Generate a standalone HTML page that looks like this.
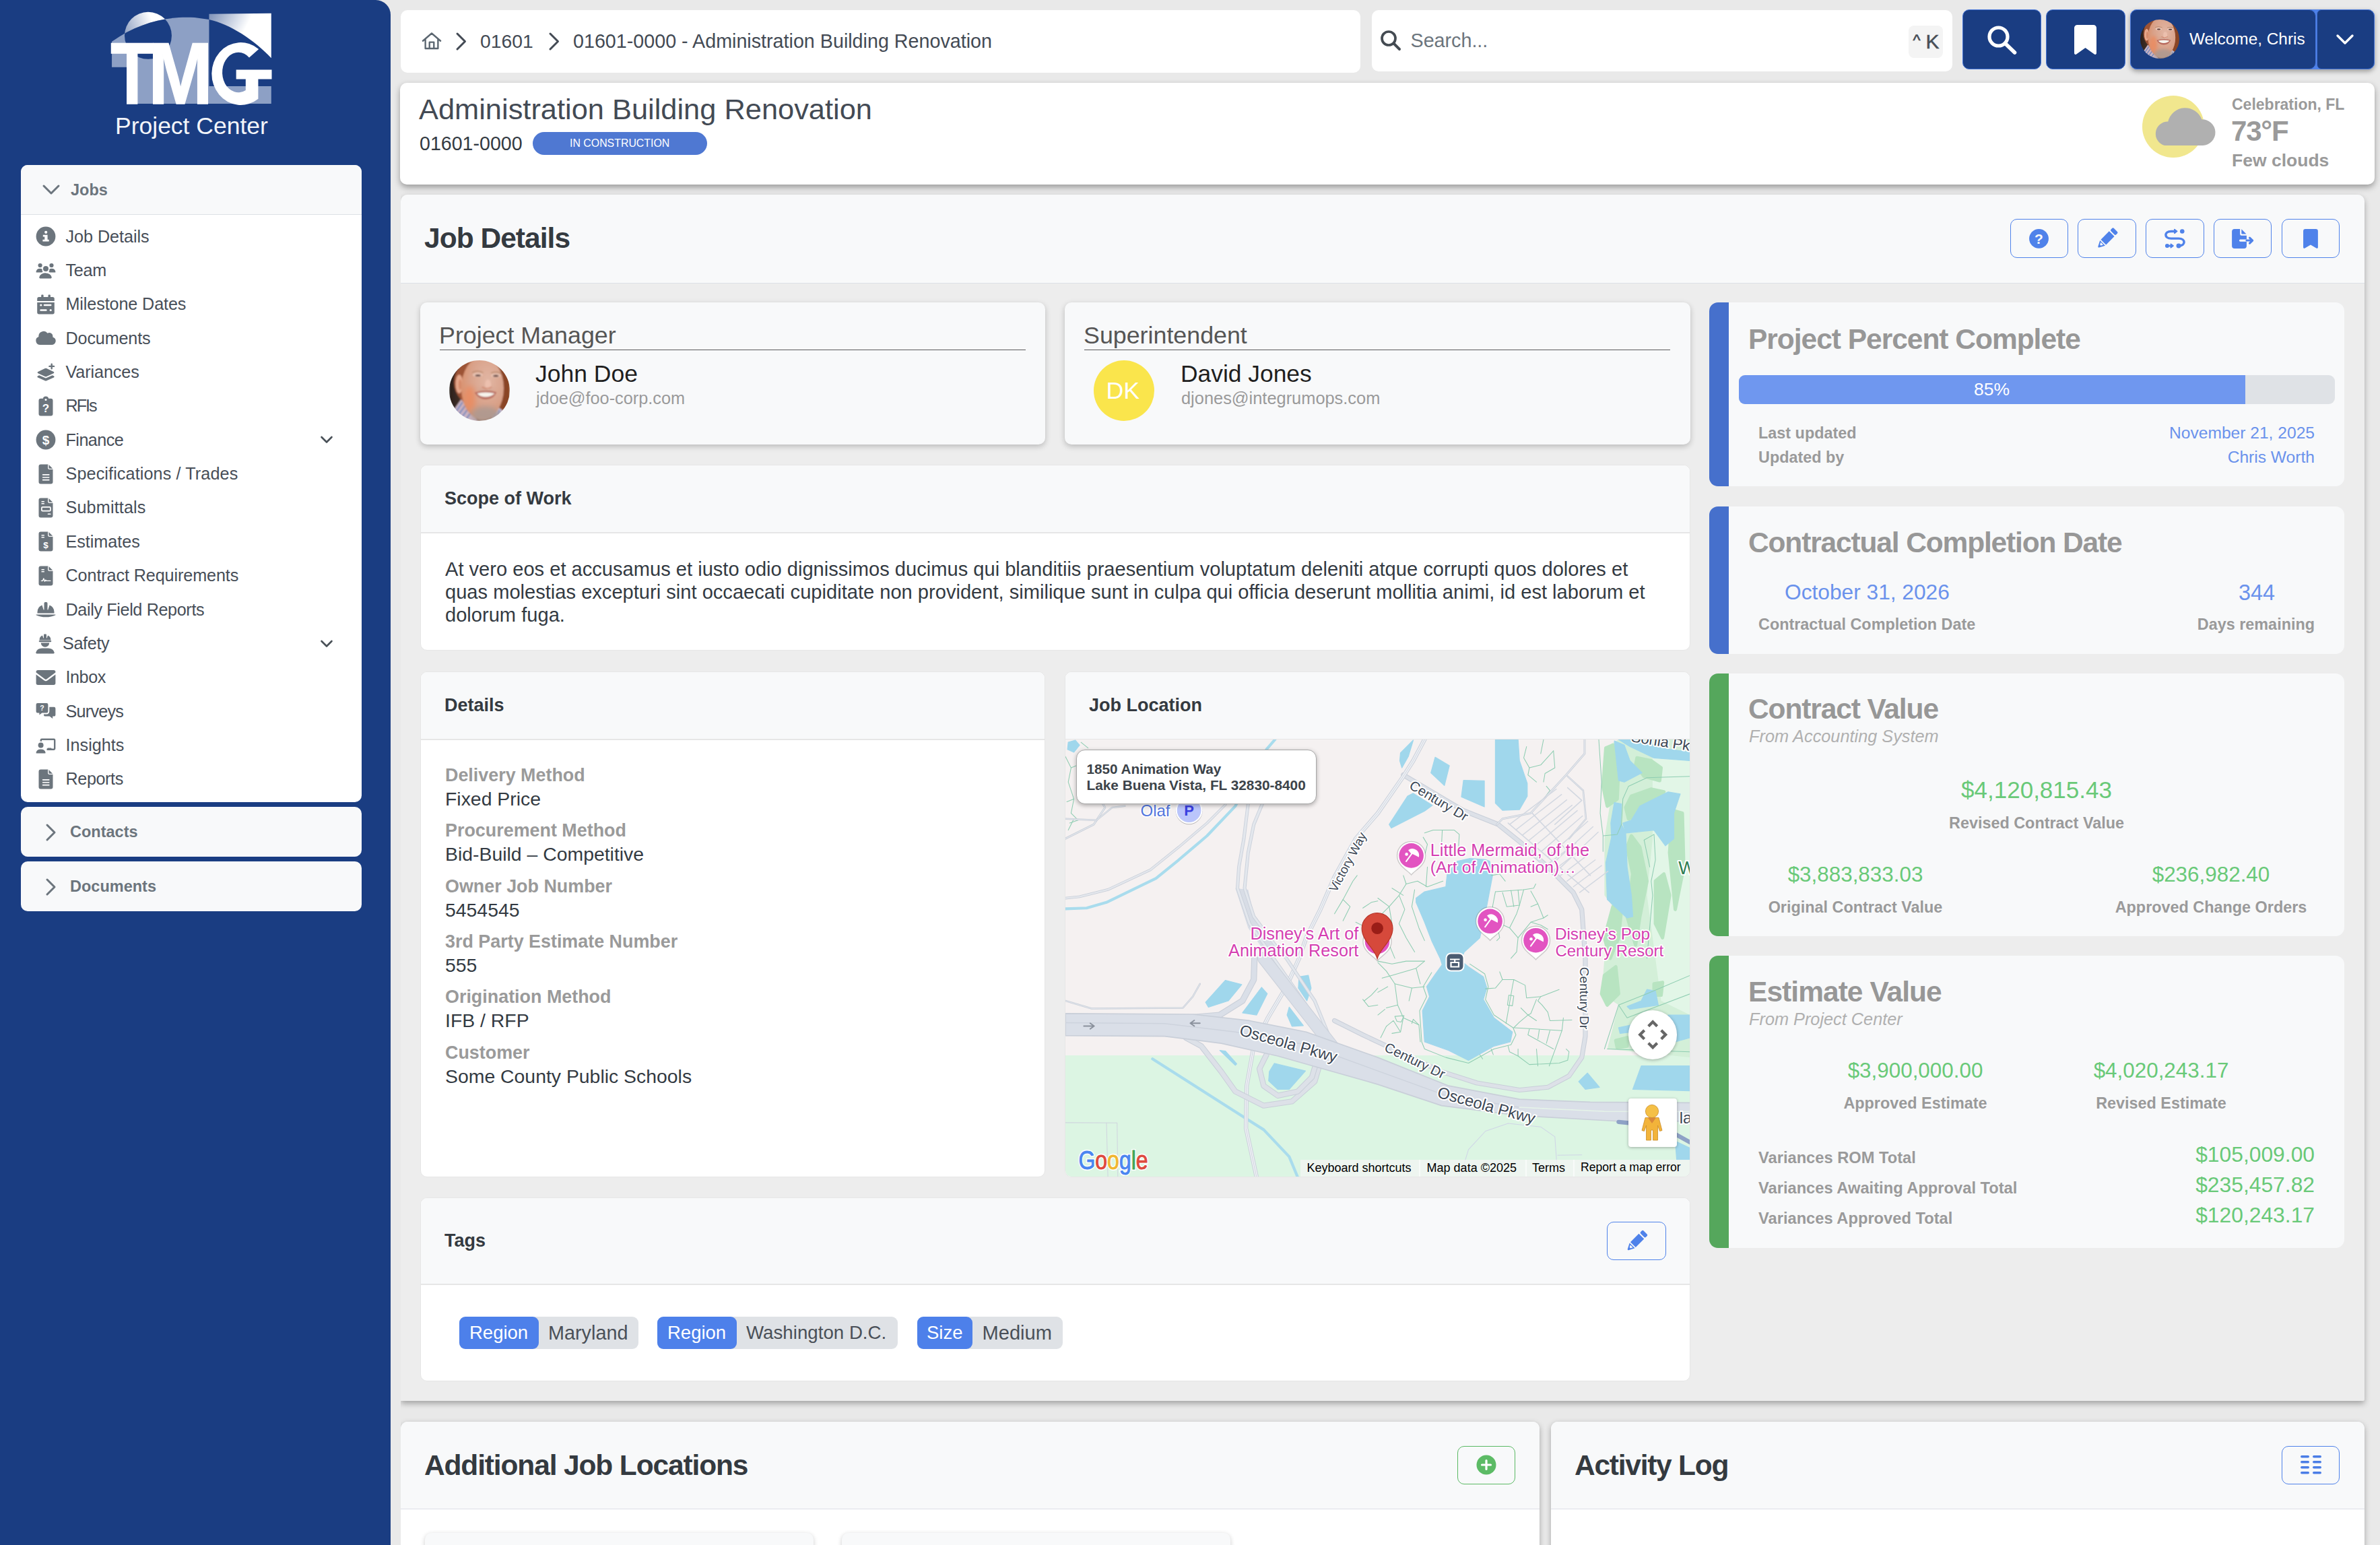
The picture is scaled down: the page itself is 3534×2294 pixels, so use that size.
<!DOCTYPE html>
<html><head><meta charset="utf-8"><title>Job Details</title>
<style>
*{box-sizing:border-box;margin:0;padding:0}
html,body{width:3534px;height:2294px;overflow:hidden}
body{background:#e9e9e9;font-family:"Liberation Sans",sans-serif;color:#333;position:relative}
.a{position:absolute}
.t{position:absolute;white-space:nowrap;line-height:1}
.b{font-weight:bold}
svg{position:absolute;overflow:visible}
#side{left:0;top:0;width:580px;height:2294px;background:#1a3d82;border-top-right-radius:22px}
.pnl{background:#f8f9fa;border-radius:10px}
.si{left:97px;font-size:25.2px;color:#474e58}
.ic{fill:#5f6770}
.card{background:#f8f9fa;border-radius:10px}
.hd{font-size:27px;font-weight:bold;color:#343a40}
.lbl{font-size:26.9px;font-weight:bold;color:#9a9a9a;left:661px}
.val{font-size:28.400px;color:#333a42;left:661px}
.btn{border:1.400px solid #4f82ea;border-radius:10px;background:#f8f9fa}
.rc{left:2538px;width:943px;background:#f8f9fa;border-radius:13px;overflow:hidden}
.rc .bar{position:absolute;left:0;top:0;bottom:0;width:29px}
.g{color:#69c978}
.gl{color:#9a9a9a;font-weight:bold;font-size:23.4px}
.bl{color:#6a92ec}
.rt{font-size:42.500px;font-weight:bold;color:#979797}


.tb{background:#1a3d82;border:1.500px solid #4474d8;border-radius:10px}
.face{border-radius:50%;background:radial-gradient(circle at 52% 48%,#e8b9a0 0,#dba489 30%,#b8704f 48%,#8a4a2e 62%,#4a2a20 85%)}


.chip{top:1955px;height:48px;background:#dfe2e6;border-radius:9px}
.chipk{top:1955px;height:48px;background:#4d80ea;border-radius:9px}
.ck{top:1965px;font-size:27.500px;color:#fff}
.cv{top:1964.500px;font-size:28.500px;color:#4a5058}

.c{text-align:center}</style></head><body>
<div id="side" class="a">
<svg style="left:140px;top:0" width="300" height="230" viewBox="0 0 2015 1545">
<defs>
<linearGradient id="lg1" x1="310" y1="300" x2="690" y2="150" gradientUnits="userSpaceOnUse"><stop offset="0" stop-color="#fff" stop-opacity=".55"/><stop offset=".7" stop-color="#fff" stop-opacity="1"/></linearGradient>
<linearGradient id="lg2" x1="1150" y1="150" x2="1600" y2="380" gradientUnits="userSpaceOnUse"><stop offset="0" stop-color="#fff" stop-opacity=".45"/><stop offset=".75" stop-color="#fff" stop-opacity="1"/></linearGradient>
<clipPath id="cpA"><path d="M175 415 C450 215 750 160 1000 175 L1145 195 L1145 860 L1765 860 L1765 1035 L330 1035 L330 670 L175 670Z"/></clipPath>
</defs>
<circle cx="537" cy="355" r="235" fill="url(#lg1)"/>
<path d="M175 415 C450 215 750 160 1000 175 L1145 195 L1145 860 L1765 860 L1765 1035 L330 1035 L330 670 L175 670Z" fill="#8da0c5"/>
<circle cx="537" cy="355" r="235" fill="#1a3d82" clip-path="url(#cpA)"/>
<path d="M1145 140 L1765 133 L1765 580 C1600 400 1350 240 1145 195Z" fill="url(#lg2)"/>
<g fill="#fff" stroke="#fff" stroke-width="10" font-family="Liberation Sans" font-weight="bold" font-size="872">
<text transform="translate(162.1 1035) scale(.806 1)">T</text>
<text transform="translate(537.2 1035) scale(.8887 1)">M</text>
<path stroke="none" d="M1640 490A290 312 0 1 0 1635 985L1635 790L1770 790L1770 695L1415 695L1415 790L1510 790L1510 900A160 200 0 1 1 1545 575Z"/>
</g>
</svg>
<div class="t" style="left:171px;top:170px;font-size:35.5px;color:#f3f5fa">Project Center</div>

<!-- Jobs panel -->
<div class="a pnl" style="left:31px;top:245px;width:506px;height:946px;background:#fff;overflow:hidden">
 <div class="a" style="left:0;top:0;width:506px;height:74px;background:#f8f9fa;border-bottom:1.200px solid #dde1e6"></div>
</div>
<svg style="left:62px;top:271.500px" width="28" height="20" viewBox="0 0 28 20"><path d="M3 4 L14 15 L25 4" fill="none" stroke="#6c757d" stroke-width="3" stroke-linecap="round" stroke-linejoin="round"/></svg>
<div class="t b" style="left:105px;top:270.500px;font-size:23.5px;color:#6c757d">Jobs</div>
<svg style="left:53.4px;top:336.2px" width="30" height="30" viewBox="-15 -15 30 30" fill="#6c757d"><circle r="14.4"/><g fill="#fff"><circle cx=".2" cy="-6.2" r="2.1"/><path d="M-4.2 -2.3H2.6V4.7H4.7V7.6H-4.6V4.7H-1.7V.6H-4.2Z"/></g></svg>
<div class="t si" style="left:97.5px;top:338.5px;letter-spacing:-0.04px">Job Details</div>
<svg style="left:53.4px;top:386.6px" width="30" height="30" viewBox="-15 -15 30 30" fill="#6c757d"><circle cx="0" cy="-2.9" r="4"/><path d="M-8.4 11.6a1.6 1.6 0 0 1-1.3-2A9 7 0 0 1 0 3.4 9 7 0 0 1 8.7 9.6a1.6 1.6 0 0 1-1.3 2Z"/><circle cx="-8.4" cy="-8" r="3.1"/><circle cx="8.5" cy="-8" r="3.1"/><path d="M-14.4 1.2A6 5.5 0 0 1-8.4 -3.2 6 5.5 0 0 1-5.4 -2.3 6 6 0 0 0-4.4 1.9 10 8 0 0 0-6.5 2.6H-13.6a1 1 0 0 1-.8-1.4Z"/><path d="M14.4 1.2A6 5.5 0 0 0 8.4 -3.2 6 5.5 0 0 0 5.4 -2.3 6 6 0 0 1 4.4 1.9 10 8 0 0 1 6.5 2.6H13.6a1 1 0 0 0 .8-1.4Z"/></svg>
<div class="t si" style="left:97.5px;top:388.9px;letter-spacing:-0.27px">Team</div>
<svg style="left:53.4px;top:436.9px" width="30" height="30" viewBox="-15 -15 30 30" fill="#6c757d"><rect x="-6.8" y="-14.4" width="3.4" height="6" rx="1.2"/><rect x="3.5" y="-14.4" width="3.4" height="6" rx="1.2"/><path d="M-12.8 -8.2a2.7 2.7 0 0 1 2.7-2.7H10.1a2.7 2.7 0 0 1 2.7 2.7V-5H-12.8Z"/><path d="M-12.8 -3.1H12.8V11.7a2.7 2.7 0 0 1-2.7 2.7H-10.1a2.7 2.7 0 0 1-2.7-2.7Z"/><g fill="#fff"><circle cx="-7.2" cy="1" r="1.6"/><rect x="-3.3" y="-.3" width="11.8" height="2.6" rx="1.3"/><rect x="-8.7" y="7.2" width="10.4" height="2.6" rx="1.3"/><circle cx="7.2" cy="8.5" r="1.6"/></g></svg>
<div class="t si" style="left:97.5px;top:439.3px;letter-spacing:-0.12px">Milestone Dates</div>
<svg style="left:53.4px;top:487.3px" width="30" height="30" viewBox="-15 -15 30 30" fill="#6c757d"><path d="M-8.3 10A6.2 6.2 0 0 1-10.6 -2 7.4 7.4 0 0 1 2.6 -7.3 5.3 5.3 0 0 1 10.3 -1.6 5.9 5.9 0 0 1 8.5 10Z"/></svg>
<div class="t si" style="left:97.5px;top:489.6px;letter-spacing:-0.16px">Documents</div>
<svg style="left:53.4px;top:537.6px" width="30" height="30" viewBox="-15 -15 30 30" fill="#6c757d"><path d="M-1.2 -5.9a2.8 2.8 0 0 1 2.4 0L11.6 -1a1.2 1.2 0 0 1 0 2.2L1.2 6a2.8 2.8 0 0 1-2.4 0L-11.6 1.2a1.2 1.2 0 0 1 0-2.2Z"/><path d="M-11.9 5.2l2.2-1 8.5 3.9a2.8 2.8 0 0 0 2.4 0l8.5-3.9 2.2 1a1.2 1.2 0 0 1 0 2.2L1.2 12.300a2.8 2.8 0 0 1-2.4 0L-11.900 7.4a1.2 1.2 0 0 1 0-2.2Z"/><path d="M8.700 -12.4V-5.8M5.400 -9.100H12" stroke="#6c757d" stroke-width="2.400" stroke-linecap="round"/></svg>
<div class="t si" style="left:97.5px;top:540.0px;letter-spacing:-0.11px">Variances</div>
<svg style="left:53.4px;top:588.0px" width="30" height="30" viewBox="-15 -15 30 30" fill="#6c757d"><path d="M-10.5 -8.200a3 3 0 0 1 3-3H-4.200A4.300 4.300 0 0 1 0 -14.400 4.300 4.300 0 0 1 4.200 -11.200H7.500a3 3 0 0 1 3 3V11.400a3 3 0 0 1-3 3H-7.500a3 3 0 0 1-3-3Z"/><circle cx="0" cy="-9.500" r="1.500" fill="#fff"/><text x="0" y="8.600" font-size="17" font-weight="bold" text-anchor="middle" fill="#fff" font-family="Liberation Sans">?</text></svg>
<div class="t si" style="left:97.5px;top:590.3px;letter-spacing:-2.06px">RFIs</div>
<svg style="left:53.4px;top:638.4px" width="30" height="30" viewBox="-15 -15 30 30" fill="#6c757d"><circle r="14.400"/><text x="0" y="6.800" font-size="19" font-weight="bold" text-anchor="middle" fill="#fff" font-family="Liberation Sans">$</text></svg>
<div class="t si" style="left:97.5px;top:640.7px;letter-spacing:-0.54px">Finance</div>
<svg style="left:475px;top:646.4px" width="20" height="14" viewBox="0 0 20 14"><path d="M2.500 3 L10 10.500 L17.500 3" fill="none" stroke="#495057" stroke-width="2.600" stroke-linecap="round" stroke-linejoin="round"/></svg>
<svg style="left:53.4px;top:688.7px" width="30" height="30" viewBox="-15 -15 30 30" fill="#6c757d"><path d="M-10.5 -11.4a3 3 0 0 1 3-3H3.6L10.5 -7.5V11.4a3 3 0 0 1-3 3H-7.5a3 3 0 0 1-3-3Z"/><path d="M3.6 -14.4V-9a1.5 1.5 0 0 0 1.5 1.5H10.5Z" fill="#fff" stroke="#fff" stroke-width=".9"/><path d="M4.400 -14.100L10.200 -8.200H5.800a1.400 1.400 0 0 1-1.400-1.400Z"/><g fill="#fff"><rect x="-5.200" y="0" width="10.800" height="1.700" rx=".8"/><rect x="-5.200" y="3.900" width="10.800" height="1.700" rx=".8"/><rect x="-5.200" y="7.800" width="10.800" height="1.700" rx=".8"/></g></svg>
<div class="t si" style="left:97.5px;top:691.1px;letter-spacing:0.11px">Specifications / Trades</div>
<svg style="left:53.4px;top:739.1px" width="30" height="30" viewBox="-15 -15 30 30" fill="#6c757d"><path d="M-10.5 -11.4a3 3 0 0 1 3-3H3.6L10.5 -7.5V11.4a3 3 0 0 1-3 3H-7.5a3 3 0 0 1-3-3Z"/><path d="M3.6 -14.4V-9a1.5 1.5 0 0 0 1.5 1.5H10.5Z" fill="#fff" stroke="#fff" stroke-width=".9"/><path d="M4.400 -14.100L10.200 -8.200H5.800a1.400 1.400 0 0 1-1.400-1.400Z"/><rect x="-6.6" y="-9.9" width="4.6" height="1.5" rx=".7" fill="#fff"/><rect x="-6.6" y="-6.9" width="4.6" height="1.5" rx=".7" fill="#fff"/><rect x="-6.100" y="-1.200" width="13" height="5.800" rx="1.200" fill="none" stroke="#fff" stroke-width="1.700"/><rect x="2.700" y="8.600" width="4.800" height="1.500" rx=".7" fill="#fff"/></svg>
<div class="t si" style="left:97.5px;top:741.4px;letter-spacing:0.15px">Submittals</div>
<svg style="left:53.4px;top:789.4px" width="30" height="30" viewBox="-15 -15 30 30" fill="#6c757d"><path d="M-10.5 -11.4a3 3 0 0 1 3-3H3.6L10.5 -7.5V11.4a3 3 0 0 1-3 3H-7.5a3 3 0 0 1-3-3Z"/><path d="M3.6 -14.4V-9a1.5 1.5 0 0 0 1.5 1.5H10.5Z" fill="#fff" stroke="#fff" stroke-width=".9"/><path d="M4.400 -14.100L10.200 -8.200H5.800a1.400 1.400 0 0 1-1.400-1.400Z"/><rect x="-6.6" y="-9.9" width="4.6" height="1.5" rx=".7" fill="#fff"/><rect x="-6.6" y="-6.9" width="4.6" height="1.5" rx=".7" fill="#fff"/><text x="0" y="9.500" font-size="13.500" font-weight="bold" text-anchor="middle" fill="#fff" font-family="Liberation Sans">$</text></svg>
<div class="t si" style="left:97.5px;top:791.8px;letter-spacing:-0.04px">Estimates</div>
<svg style="left:53.4px;top:839.8px" width="30" height="30" viewBox="-15 -15 30 30" fill="#6c757d"><path d="M-10.5 -11.4a3 3 0 0 1 3-3H3.6L10.5 -7.5V11.4a3 3 0 0 1-3 3H-7.5a3 3 0 0 1-3-3Z"/><path d="M3.6 -14.4V-9a1.5 1.5 0 0 0 1.5 1.5H10.5Z" fill="#fff" stroke="#fff" stroke-width=".9"/><path d="M4.400 -14.100L10.200 -8.200H5.800a1.400 1.400 0 0 1-1.400-1.400Z"/><rect x="-6.6" y="-9.9" width="4.6" height="1.5" rx=".7" fill="#fff"/><rect x="-6.6" y="-6.9" width="4.6" height="1.5" rx=".7" fill="#fff"/><path d="M-6.600 7.400h2l1.400-3.400 1.700 4.200 1.300-2 .9 1.200H6.800" fill="none" stroke="#fff" stroke-width="1.400" stroke-linecap="round" stroke-linejoin="round"/></svg>
<div class="t si" style="left:97.5px;top:842.1px;letter-spacing:-0.11px">Contract Requirements</div>
<svg style="left:53.4px;top:890.2px" width="30" height="30" viewBox="-15 -15 30 30" fill="#6c757d"><path d="M-12.500 5.600V3.700A11 11 0 0 1-5.600 -6.600L-3.300 .4H-2.500V-9.300a1.700 1.700 0 0 1 1.700-1.700H.8a1.700 1.700 0 0 1 1.700 1.700V.4H3.300L5.600 -6.600A11 11 0 0 1 12.500 3.700V5.600Z"/><path d="M-14.400 7.500H14.400V8.200C11 10.300 5 11.300 0 11.300S-11 10.300-14.400 8.200Z"/></svg>
<div class="t si" style="left:97.5px;top:892.5px;letter-spacing:-0.37px">Daily Field Reports</div>
<svg style="left:52.2px;top:940.5px" width="30" height="30" viewBox="-15 -15 30 30" fill="#6c757d"><path d="M-8.400 -5.600V-6.600A7 7 0 0 1-4 -12.600L-2.600 -8.500H-2V-13.400a1 1 0 0 1 1-1H1a1 1 0 0 1 1 1V-8.500H2.600L4 -12.600A7 7 0 0 1 8.400 -6.600V-5.600Z"/><rect x="-9.300" y="-5" width="18.600" height="2.200" rx="1.100"/><path d="M-6.200 -1.400H6.200A6.200 6.200 0 0 1-6.200 -1.400Z"/><path d="M-12.400 14.400A1.400 1.400 0 0 1-13.700 12.700 9.500 8.500 0 0 1-4.500 6.500H4.500A9.500 8.500 0 0 1 13.700 12.700 1.400 1.400 0 0 1 12.400 14.400Z" transform="translate(0 0)"/></svg>
<div class="t si" style="left:93px;top:942.9px;letter-spacing:-0.35px">Safety</div>
<svg style="left:475px;top:948.5px" width="20" height="14" viewBox="0 0 20 14"><path d="M2.500 3 L10 10.500 L17.500 3" fill="none" stroke="#495057" stroke-width="2.600" stroke-linecap="round" stroke-linejoin="round"/></svg>
<svg style="left:53.4px;top:990.9px" width="30" height="30" viewBox="-15 -15 30 30" fill="#6c757d"><path d="M-14.400 -8.400a2.700 2.700 0 0 1 2.700-2.700H11.700a2.700 2.700 0 0 1 2.700 2.700V-7.400L1.400 2.200a2.400 2.400 0 0 1-2.800 0L-14.400 -7.400Z"/><path d="M-14.400 -4.600L-2.500 4.200a4.200 4.200 0 0 0 5 0L14.400 -4.600V8.300a2.700 2.700 0 0 1-2.700 2.700H-11.700a2.700 2.700 0 0 1-2.700-2.700Z"/></svg>
<div class="t si" style="left:97.5px;top:993.2px;letter-spacing:-0.46px">Inbox</div>
<svg style="left:53.4px;top:1041.2px" width="30" height="30" viewBox="-15 -15 30 30" fill="#6c757d"><path d="M-14.400 -9.700a2.200 2.200 0 0 1 2.200-2.200H1.200a2.200 2.200 0 0 1 2.200 2.200V.300a2.200 2.200 0 0 1-2.200 2.200H-5.600L-9.600 5.400V2.500H-12.200A2.200 2.200 0 0 1-14.400 .300Z"/><text x="-5.500" y="-.8" font-size="10.500" font-weight="bold" text-anchor="middle" fill="#fff" font-family="Liberation Sans">?</text><path d="M5.300 -6.300H12.200a2.200 2.200 0 0 1 2.200 2.200V5.400a2.200 2.200 0 0 1-2.200 2.200H10.200V10.900L5.600 7.600H-.8A2.200 2.200 0 0 1-3 5.400V4.400H1.200A4 4 0 0 0 5.300 .300Z"/></svg>
<div class="t si" style="left:97.5px;top:1043.6px;letter-spacing:-0.77px">Surveys</div>
<svg style="left:53.4px;top:1091.6px" width="30" height="30" viewBox="-15 -15 30 30" fill="#6c757d"><circle cx="-7.400" cy="-.5" r="4"/><path d="M-13.600 11.600a.9 .9 0 0 1-.8-1.200A7 6 0 0 1-7.400 5.400 7 6 0 0 1-.4 10.400a.9 .9 0 0 1-.8 1.200Z"/><path d="M-8.400 -6.200V-8a2.400 2.400 0 0 1 2.400-2.400H12a2.400 2.400 0 0 1 2.400 2.400V4.600A2.400 2.400 0 0 1 12 7H1.500V4.600H12V-8H-6V-6.200Z"/><path d="M2.200 4.600a1.200 1.200 0 0 1 1.200-1.200H7.400a1.200 1.200 0 0 1 1.200 1.200V6H2.200Z"/></svg>
<div class="t si" style="left:97.5px;top:1093.9px;letter-spacing:0.02px">Insights</div>
<svg style="left:53.4px;top:1142.0px" width="30" height="30" viewBox="-15 -15 30 30" fill="#6c757d"><path d="M-10.5 -11.4a3 3 0 0 1 3-3H3.6L10.5 -7.5V11.4a3 3 0 0 1-3 3H-7.5a3 3 0 0 1-3-3Z"/><path d="M3.6 -14.4V-9a1.5 1.5 0 0 0 1.5 1.5H10.5Z" fill="#fff" stroke="#fff" stroke-width=".9"/><path d="M4.400 -14.100L10.200 -8.200H5.800a1.400 1.400 0 0 1-1.400-1.400Z"/><g fill="#fff"><rect x="-5.200" y="0" width="10.800" height="1.700" rx=".8"/><rect x="-5.200" y="3.900" width="10.800" height="1.700" rx=".8"/><rect x="-5.200" y="7.800" width="10.800" height="1.700" rx=".8"/></g></svg>
<div class="t si" style="left:97.5px;top:1144.3px;letter-spacing:-0.41px">Reports</div>

<!-- Contacts / Documents -->
<div class="a pnl" style="left:31px;top:1198px;width:506px;height:74px"></div>
<div class="a pnl" style="left:31px;top:1279px;width:506px;height:74px"></div>
<svg style="left:67px;top:1222px" width="18" height="28" viewBox="0 0 18 28"><path d="M3 3 L14 14 L3 25" fill="none" stroke="#6c757d" stroke-width="3" stroke-linecap="round" stroke-linejoin="round"/></svg>
<svg style="left:67px;top:1303px" width="18" height="28" viewBox="0 0 18 28"><path d="M3 3 L14 14 L3 25" fill="none" stroke="#6c757d" stroke-width="3" stroke-linecap="round" stroke-linejoin="round"/></svg>
<div class="t b" style="left:104px;top:1223.500px;font-size:23.5px;color:#6c757d">Contacts</div>
<div class="t b" style="left:104px;top:1304.500px;font-size:23.5px;color:#6c757d">Documents</div>
</div>
<svg width="0" height="0" style="left:0;top:0"><defs>
<linearGradient id="fbg" x1="0" x2="1" y1="0" y2="0"><stop offset="0" stop-color="#2a201c"/><stop offset=".28" stop-color="#4e382c"/><stop offset=".7" stop-color="#8c4828"/><stop offset="1" stop-color="#8a4424"/></linearGradient>
<radialGradient id="fsk" cx=".62" cy=".38" r=".75"><stop offset="0" stop-color="#e2b6a4"/><stop offset=".55" stop-color="#d9a28a"/><stop offset="1" stop-color="#d98a62"/></radialGradient>
<clipPath id="fcl"><circle cx="50" cy="50" r="50"/></clipPath>
<filter id="fbl2" x="-.5" y="-.5" width="2" height="2"><feGaussianBlur stdDeviation="4"/></filter><filter id="fbl" x="-.1" y="-.1" width="1.2" height="1.2"><feGaussianBlur stdDeviation="1.300"/></filter><symbol id="face" viewBox="0 0 100 100"><g clip-path="url(#fcl)"><g filter="url(#fbl)">
<rect width="100" height="100" fill="url(#fbg)"/>
<path d="M6 84L20 64 50 104H8Z" fill="#c9b4c4"/><path d="M9 88L22 69M13 93L27 74M18 98L31 80M24 102L36 86" stroke="#6f86be" stroke-width="2.200"/>
<path d="M76 74L90 84 84 100 70 96Z" fill="#c9c0d4"/><path d="M78 80L74 94M83 82L79 97M87 86L84 98" stroke="#6f86be" stroke-width="2"/>
<ellipse cx="46" cy="36" rx="38" ry="40" fill="#9c5236"/>
<ellipse cx="16.500" cy="39" rx="6" ry="15.500" fill="#e6a88c"/><ellipse cx="18" cy="40" rx="2.500" ry="9" fill="#d58a6a"/>
<ellipse cx="55" cy="46" rx="35" ry="52" fill="url(#fsk)"/>
<ellipse cx="34" cy="62" rx="9" ry="20" fill="#ea8c62" opacity=".85" filter="url(#fbl2)"/>
<ellipse cx="60" cy="90" rx="24" ry="14" fill="#ab9a93" opacity=".85" filter="url(#fbl2)"/><ellipse cx="60" cy="50" rx="13" ry="3" fill="#b89488" opacity=".5" filter="url(#fbl2)"/>
<ellipse cx="47" cy="24" rx="8" ry="3.600" fill="#e9c4b4"/><ellipse cx="77" cy="25" rx="8" ry="3.600" fill="#e9c4b4"/>
<ellipse cx="47.500" cy="25" rx="4.600" ry="1.700" fill="#5a3a38"/><ellipse cx="77" cy="25.500" rx="4.600" ry="1.700" fill="#5a3a38"/>
<path d="M38 20Q47 16 56 20.500" stroke="#b98a6c" stroke-width="1.600" fill="none"/><path d="M69 21Q78 17.500 86 22" stroke="#b98a6c" stroke-width="1.600" fill="none"/>
<ellipse cx="64" cy="40" rx="5" ry="8" fill="#ecc0ae"/><path d="M54 44Q62 49 70 44" stroke="#d0846a" stroke-width="1.600" fill="none"/>
<path d="M42 53Q60 47 78 52.500Q74 64 60 64.500Q48 64 42 53Z" fill="#b8695c"/>
<path d="M46 54.500Q60 51 75 54.500Q70 60.500 60 60.500Q50 60.500 46 54.500Z" fill="#f6f3ec"/>
</g></g></symbol></defs></svg>
<!-- top bar -->
<div class="a" style="left:595px;top:15px;width:1425px;height:93px;background:#fff;border-radius:10px"></div>
<svg style="left:626px;top:46.500px" width="30" height="27.500" viewBox="0 0 32 29"><path d="M2 14.500 L16 2.500 L30 14.500 M6 11.500V26.500H26V11.500 M12.500 26V16.500H19.500V26" fill="none" stroke="#5b6670" stroke-width="2.500" stroke-linecap="round" stroke-linejoin="round"/></svg>
<svg style="left:676px;top:47px" width="18" height="29" viewBox="0 0 18 29"><path d="M3 3 L14.500 14.500 L3 26" fill="none" stroke="#434a54" stroke-width="3" stroke-linecap="round" stroke-linejoin="round"/></svg>
<div class="t" style="left:713px;top:46.500px;font-size:28.300px;color:#434a54">01601</div>
<svg style="left:814px;top:47px" width="18" height="29" viewBox="0 0 18 29"><path d="M3 3 L14.500 14.500 L3 26" fill="none" stroke="#434a54" stroke-width="3" stroke-linecap="round" stroke-linejoin="round"/></svg>
<div class="t" style="left:851px;top:46.500px;font-size:28.700px;color:#434a54">01601-0000 - Administration Building Renovation</div>

<div class="a" style="left:2037px;top:15px;width:862px;height:91px;background:#fff;border-radius:10px"></div>
<svg style="left:2049px;top:44px" width="32" height="32" viewBox="0 0 32 32"><circle cx="13" cy="13" r="10" fill="none" stroke="#444b52" stroke-width="3.700"/><path d="M20.500 20.500 L29 29" stroke="#444b52" stroke-width="3.900" stroke-linecap="round"/></svg>
<div class="t" style="left:2094.500px;top:45.500px;font-size:28.700px;color:#6c757d">Search...</div>
<div class="a" style="left:2834px;top:38px;width:51px;height:48px;background:#f4f4f4;border-radius:8px"></div>
<div class="t" style="left:2840.500px;top:48.500px;font-size:23.500px;color:#484e57;-webkit-text-stroke:.7px #484e57">^</div>
<div class="t" style="left:2859.500px;top:46.500px;font-size:30px;color:#484e57;-webkit-text-stroke:.5px #484e57">K</div>

<div class="a tb" style="left:2914px;top:14px;width:117px;height:89px"></div>
<svg style="left:2950px;top:36.500px" width="46" height="44" viewBox="0 0 46 44"><circle cx="17.500" cy="17.500" r="13.500" fill="none" stroke="#fff" stroke-width="5.200"/><path d="M28 28 L41.500 41" stroke="#fff" stroke-width="5.600" stroke-linecap="round"/></svg>
<div class="a tb" style="left:3038px;top:14px;width:118px;height:89px"></div>
<svg style="left:3080px;top:37px" width="33" height="44" viewBox="0 0 33 44"><path d="M0 4.500a4.500 4.500 0 0 1 4.500-4.500H28.500a4.500 4.500 0 0 1 4.500 4.500V42a2 2 0 0 1-3.200 1.600L16.500 34 3.200 43.600A2 2 0 0 1 0 42Z" fill="#fff"/></svg>
<div class="a" style="left:3163px;top:14px;width:363px;height:89px;border-radius:10px;background:#4f82ea;box-shadow:0 3px 7px rgba(0,0,0,.35)"></div><div class="a tb" style="left:3163px;top:14px;width:276px;height:89px"></div>
<div class="a tb" style="left:3440px;top:14px;width:86px;height:89px;border-radius:7px 10px 10px 7px"></div>
<svg style="left:3178px;top:29px" width="58" height="58"><use href="#face" width="58" height="58"/></svg>
<div class="t" style="left:3251px;top:46px;font-size:24.400px;color:#fff">Welcome, Chris</div>
<svg style="left:3468px;top:50px" width="28" height="18" viewBox="0 0 28 18"><path d="M3 3 L14 14 L25 3" fill="none" stroke="#fff" stroke-width="3.400" stroke-linecap="round" stroke-linejoin="round"/></svg>

<!-- job header card -->
<div class="a" style="left:594px;top:123px;width:2932px;height:151px;background:#fff;border-radius:10px;box-shadow:0 4px 10px rgba(0,0,0,.35)"></div>
<div class="t" style="left:622px;top:141px;font-size:43.400px;color:#434a54">Administration Building Renovation</div>
<div class="t" style="left:623px;top:199px;font-size:28.600px;color:#333a42">01601-0000</div>
<div class="a" style="left:791px;top:196px;width:259px;height:34px;border-radius:17px;background:#4f78d2"></div>
<div class="t" style="left:846px;top:205px;font-size:15.900px;color:#fff">IN CONSTRUCTION</div>
<!-- weather -->
<div class="a" style="left:3181px;top:142px;width:92px;height:92px;border-radius:50%;background:#f1e78e"></div>
<svg style="left:3198.400px;top:159.500px" width="93.600" height="56.500" viewBox="300 245 580 350"><path d="M400 592A112 112 0 0 1 432 372A162 162 0 0 1 742 352A120 120 0 0 1 752 592Z" fill="#b0b0b0"/></svg>
<div class="t b" style="left:3314px;top:144px;font-size:23px;color:#9a9a9a">Celebration, FL</div>
<div class="t b" style="left:3313px;top:173.500px;font-size:42px;color:#9a9a9a;letter-spacing:-1.2px">73°F</div>
<div class="t b" style="left:3314px;top:225px;font-size:26.500px;color:#9a9a9a">Few clouds</div>
<!-- Job Details panel -->
<div class="a" style="left:595px;top:289px;width:2916px;height:1791px;background:#ededed;border-radius:10px 10px 2px 0;box-shadow:0 4px 8px rgba(0,0,0,.3)"></div>
<div class="a" style="left:595px;top:289px;width:2916px;height:132px;background:#f8f9fa;border-radius:10px 10px 0 0;border-bottom:1.500px solid #dde0e6"></div>
<div class="t b" style="left:630px;top:332.500px;font-size:42.500px;color:#343a40;letter-spacing:-.97px">Job Details</div>
<!-- header buttons -->
<div class="a btn" style="left:2985px;top:325px;width:86px;height:58px"></div>
<div class="a btn" style="left:3085px;top:325px;width:87px;height:58px"></div>
<div class="a btn" style="left:3186px;top:325px;width:87px;height:58px"></div>
<div class="a btn" style="left:3287px;top:325px;width:86px;height:58px"></div>
<div class="a btn" style="left:3388px;top:325px;width:86px;height:58px"></div>
<svg style="left:2970px;top:310px" width="520" height="90" viewBox="0 0 2380 412" fill="#4f82ea">
<circle cx="263" cy="203" r="66"/><text x="263" y="237" font-size="96" font-weight="bold" text-anchor="middle" fill="#f8f9fa" font-family="Liberation Sans">?</text>
<g transform="translate(725 203.500) rotate(45)"><rect x="-25" y="-84" width="50" height="28" rx="9"/><rect x="-25" y="-47" width="50" height="80"/><path d="M-25 41H25L5 80Q0 86 -5 80Z"/><path d="M-12 47H12L0 70Z" fill="#f8f9fa"/><path d="M-6 62H6L1.500 78Q0 81 -1.500 78Z"/></g>
<g fill="none" stroke="#4f82ea" stroke-width="16" stroke-linecap="round" stroke-linejoin="round"><path d="M1213 252C1262 252 1262 202 1213 202H1162C1113 202 1113 153 1162 153H1192"/><path d="M1185 140L1202 153L1185 166Z" fill="#4f82ea" stroke-width="8"/><path d="M1160 240L1176 252L1160 264Z" fill="#4f82ea" stroke-width="8"/></g>
<circle cx="1237" cy="153" r="15"/><circle cx="1135" cy="252" r="14"/><circle cx="1213" cy="252" r="16"/><rect x="1135" y="246" width="30" height="12"/>
<path d="M1575 155a18 18 0 0 1 18-18H1630V172a10 10 0 0 0 10 10H1675V208H1632a7.500 7.500 0 0 0 0 15H1675V252a18 18 0 0 1-18 18H1593a18 18 0 0 1-18-18Z"/><path d="M1640 139L1673 172H1646a6 6 0 0 1-6-6Z"/>
<path d="M1675 215.500H1712M1696 197L1715 215.500L1696 234" fill="none" stroke="#4f82ea" stroke-width="14" stroke-linecap="round" stroke-linejoin="round"/>
<path d="M2060 152a15 15 0 0 1 15-15H2145a15 15 0 0 1 15 15V262a7 7 0 0 1-11 6L2110 245 2071 268a7 7 0 0 1-11-6Z"/>
</svg>

<!-- PM card -->
<div class="a card" style="left:624px;top:449px;width:928px;height:211px;box-shadow:0 3px 8px rgba(0,0,0,.22)"></div>
<div class="t" style="left:652px;top:481px;font-size:35.800px;color:#555">Project Manager</div>
<div class="a" style="left:653px;top:519px;width:870px;height:1px;background:#5a5a5a"></div>
<svg style="left:667px;top:535px" width="90" height="90"><use href="#face" width="90" height="90"/></svg>
<div class="t" style="left:795px;top:538px;font-size:35.500px;color:#1f1f1f">John Doe</div>
<div class="t" style="left:796px;top:579px;font-size:25.300px;color:#9a9a9a">jdoe@foo-corp.com</div>
<!-- Super card -->
<div class="a card" style="left:1581px;top:449px;width:929px;height:211px;box-shadow:0 3px 8px rgba(0,0,0,.22)"></div>
<div class="t" style="left:1609px;top:481px;font-size:35.800px;color:#555">Superintendent</div>
<div class="a" style="left:1610px;top:519px;width:870px;height:1px;background:#5a5a5a"></div>
<div class="a" style="left:1624px;top:535px;width:90px;height:90px;border-radius:50%;background:#fae54c"></div>
<div class="t" style="left:1642.500px;top:562.500px;font-size:35.800px;color:#fff">DK</div>
<div class="t" style="left:1753px;top:538px;font-size:35.400px;color:#1f1f1f">David Jones</div>
<div class="t" style="left:1754px;top:579px;font-size:25.400px;color:#9a9a9a">djones@integrumops.com</div>

<!-- Scope of Work -->
<div class="a" style="left:624px;top:690px;width:1886px;height:276px;background:#fff;border-radius:10px;border:1px solid #e6e6e6"></div>
<div class="a" style="left:625px;top:691px;width:1884px;height:101px;background:#f8f9fa;border-radius:9px 9px 0 0;border-bottom:2px solid #e6e6e6"></div>
<div class="t hd" style="left:660px;top:727px">Scope of Work</div>
<div class="a" style="left:661px;top:828px;width:1830px;font-size:29.100px;line-height:34px;color:#333a42">At vero eos et accusamus et iusto odio dignissimos ducimus qui blanditiis praesentium voluptatum deleniti atque corrupti quos dolores et<br>quas molestias excepturi sint occaecati cupiditate non provident, similique sunt in culpa qui officia deserunt mollitia animi, id est laborum et<br>dolorum fuga.</div>

<!-- Details -->
<div class="a" style="left:624px;top:997px;width:928px;height:751px;background:#fff;border-radius:10px;border:1px solid #e6e6e6"></div>
<div class="a" style="left:625px;top:998px;width:926px;height:101px;background:#f8f9fa;border-radius:9px 9px 0 0;border-bottom:2px solid #e6e6e6"></div>
<div class="t hd" style="left:660px;top:1034px">Details</div>
<div class="t lbl" style="top:1138px">Delivery Method</div><div class="t val" style="top:1172px">Fixed Price</div>
<div class="t lbl" style="top:1220px">Procurement Method</div><div class="t val" style="top:1254px">Bid-Build – Competitive</div>
<div class="t lbl" style="top:1303px">Owner Job Number</div><div class="t val" style="top:1337px">5454545</div>
<div class="t lbl" style="top:1385px">3rd Party Estimate Number</div><div class="t val" style="top:1419px">555</div>
<div class="t lbl" style="top:1467px">Origination Method</div><div class="t val" style="top:1501px">IFB / RFP</div>
<div class="t lbl" style="top:1550px">Customer</div><div class="t val" style="top:1584px">Some County Public Schools</div>

<!-- Job Location -->
<div class="a" style="left:1581px;top:997px;width:929px;height:751px;background:#fff;border-radius:10px;border:1px solid #e6e6e6"></div>
<div class="a" style="left:1582px;top:998px;width:927px;height:101px;background:#f8f9fa;border-radius:9px 9px 0 0;border-bottom:2px solid #e6e6e6"></div>
<div class="t hd" style="left:1617px;top:1034px">Job Location</div>
<!--MAP-->

<!-- Tags -->
<div class="a" style="left:624px;top:1778px;width:1886px;height:273px;background:#fff;border-radius:10px;border:1px solid #e6e6e6"></div>
<div class="a" style="left:625px;top:1779px;width:1884px;height:129px;background:#f8f9fa;border-radius:9px 9px 0 0;border-bottom:2px solid #e6e6e6"></div>
<div class="t hd" style="left:660px;top:1829px">Tags</div>
<div class="a btn" style="left:2386px;top:1814px;width:88px;height:57px"></div>
<svg style="left:2415px;top:1828px" width="30" height="30" viewBox="-68 -68 136 136" fill="#4f82ea"><g transform="rotate(45)"><rect x="-25" y="-84" width="50" height="28" rx="9"/><rect x="-25" y="-47" width="50" height="80"/><path d="M-25 41H25L5 80Q0 86 -5 80Z"/><path d="M-12 47H12L0 70Z" fill="#f8f9fa"/><path d="M-6 62H6L1.500 78Q0 81 -1.500 78Z"/></g></svg>
<div class="a chip" style="left:682px;width:266px"></div><div class="a chipk" style="left:682px;width:118px"></div>
<div class="t ck" style="left:697px">Region</div><div class="t cv" style="left:814px;font-size:28.800px">Maryland</div>
<div class="a chip" style="left:976px;width:357px"></div><div class="a chipk" style="left:976px;width:118px"></div>
<div class="t ck" style="left:991px">Region</div><div class="t cv" style="left:1108px;font-size:27.700px;top:1965px">Washington D.C.</div>
<div class="a chip" style="left:1362px;width:216px"></div><div class="a chipk" style="left:1362px;width:82px"></div>
<div class="t ck" style="left:1376px">Size</div><div class="t cv" style="left:1458.500px;font-size:29.100px">Medium</div>
<div class="a" style="left:1582px;top:1098px;width:927px;height:649px;overflow:hidden;border-radius:0 0 9px 9px" id="mapbox"></div>
<svg style="left:1582px;top:1098px;overflow:hidden;border-radius:0 0 9px 9px" width="927" height="649" viewBox="0 0 4408 3086" preserveAspectRatio="none"><defs><clipPath id="mclipA"><rect x="0" y="0" width="3780" height="2560"/></clipPath></defs><rect x="0" y="0" width="4412" height="3090" fill="#f5f1f1"/><rect x="0" y="2230" width="4412" height="860" fill="#dcf5e3"/><path d="M3796 0 L4412 0 L4412 1545 L3796 1545Z" fill="#f5f1f1" /><path d="M3806 60 L3906 0 L4412 0 L4412 1545 L4412 2245 L3826 2185 L3906 1875 L3786 1795 L3806 1545 L3856 1545 L3866 1180 L3806 1100 L3806 700 L3846 450 L3796 300Z" fill="#d3efd8" /><path d="M4146 120 L4412 120 L4412 1545 L4412 1945 L4206 1845 L4166 1545 L4166 1545 L4106 1100 L4146 700Z" fill="#e2f6e7" /><path d="M3816 60 L3866 40 L3906 200 L3896 420 L3826 470 L3796 330Z" fill="#b8e4c1" stroke="#b8e4c1" stroke-width="24" stroke-linejoin="round"/><path d="M4036 130 L4136 150 L4206 200 L4196 290 L4086 260 L4026 180Z" fill="#b8e4c1" stroke="#b8e4c1" stroke-width="24" stroke-linejoin="round"/><path d="M3996 400 L4136 350 L4226 370 L4106 440 L4036 540 L3976 560 L3956 480Z" fill="#b8e4c1" stroke="#b8e4c1" stroke-width="24" stroke-linejoin="round"/><path d="M3996 680 L4056 760 L4106 1000 L4056 1250 L4026 1450 L3966 1250 L4006 950 L3966 760Z" fill="#b8e4c1" stroke="#b8e4c1" stroke-width="24" stroke-linejoin="round"/><path d="M4166 1000 L4226 950 L4266 1100 L4216 1400 L4166 1300Z" fill="#b8e4c1" stroke="#b8e4c1" stroke-width="24" stroke-linejoin="round"/><path d="M4286 500 L4356 520 L4366 900 L4306 1200 L4266 800Z" fill="#b8e4c1" stroke="#b8e4c1" stroke-width="24" stroke-linejoin="round"/><path d="M3866 1180 L3926 1200 L3906 1400 L3846 1545 L3806 1400Z" fill="#b8e4c1" stroke="#b8e4c1" stroke-width="24" stroke-linejoin="round"/><path d="M3806 1665 L3886 1605 L3906 1795 L3826 1875 L3786 1795Z" fill="#b8e4c1" stroke="#b8e4c1" stroke-width="24" stroke-linejoin="round"/><path d="M4156 1725 L4216 1715 L4206 1805 L4156 1805Z" fill="#b8e4c1" stroke="#b8e4c1" stroke-width="24" stroke-linejoin="round"/><path d="M3886 2125 L3966 2105 L3966 2165 L3896 2175Z" fill="#b8e4c1" stroke="#b8e4c1" stroke-width="24" stroke-linejoin="round"/><path d="M20 20 L70 5 L100 40 L60 90 L15 70Z" fill="#a0d7ec" stroke="#a0d7ec" stroke-width="6" stroke-linejoin="round"/><path d="M2366 95 L2456 5 L2421 120 L2376 200 L2361 150Z" fill="#a0d7ec" stroke="#a0d7ec" stroke-width="6" stroke-linejoin="round"/><path d="M2611 125 L2711 185 L2676 325 L2581 235Z" fill="#a0d7ec" stroke="#a0d7ec" stroke-width="6" stroke-linejoin="round"/><path d="M2811 288 L2958 292 L2958 475 L2796 405Z" fill="#a0d7ec" stroke="#a0d7ec" stroke-width="6" stroke-linejoin="round"/><path d="M2286 600 L2416 400 L2456 380 L2591 465 L2536 505 L2301 625Z" fill="#a0d7ec" stroke="#a0d7ec" stroke-width="6" stroke-linejoin="round"/><path d="M3036 0 L3196 0 L3206 150 L3261 310 L3261 400 L3206 495 L3086 500 L3036 450Z" fill="#a0d7ec" stroke="#a0d7ec" stroke-width="6" stroke-linejoin="round"/><path d="M3876 10 L3946 40 L3986 150 L4071 235 L3946 300 L3906 290Z" fill="#a0d7ec" stroke="#a0d7ec" stroke-width="6" stroke-linejoin="round"/><path d="M3906 0 L4056 0 L4206 60 L4412 90 L4412 150 L4156 130 L3986 50Z" fill="#a0d7ec" stroke="#a0d7ec" stroke-width="6" stroke-linejoin="round"/><path d="M4056 470 L4256 370 L4341 385 L4296 520 L4296 700 L4236 750 L4156 640 L3956 660 L3936 590 L3996 570Z" fill="#a0d7ec" stroke="#a0d7ec" stroke-width="6" stroke-linejoin="round"/><path d="M3876 445 L3926 455 L3921 590 L3956 660 L3966 900 L3996 1100 L4006 1250 L3966 1260 L3826 1130 L3816 870 L3856 690 L3851 590Z" fill="#a0d7ec" stroke="#a0d7ec" stroke-width="6" stroke-linejoin="round"/><path d="M2476 1120 L2536 1075 L2686 1040 L2696 950 L2766 860 L2856 840 L2966 848 L2996 860 L3016 960 L2976 1170 L2951 1290 L2926 1400 L2816 1500 L2790 1560 L2846 1605 L2951 1675 L2976 1755 L2951 1835 L3026 1965 L3156 2065 L3141 2135 L3026 2165 L2846 2265 L2706 2195 L2536 2135 L2521 1915 L2571 1815 L2551 1745 L2606 1665 L2660 1590 L2646 1545 L2586 1420 L2536 1290 L2476 1150Z" fill="#a0d7ec" stroke="#a0d7ec" stroke-width="6" stroke-linejoin="round"/><path d="M1130 1700 L1245 1730 L1150 1845 L1010 1890 L990 1855Z" fill="#a0d7ec" stroke="#a0d7ec" stroke-width="6" stroke-linejoin="round"/><path d="M1385 1750 L1425 1795 L1350 1945 L1250 1930Z" fill="#a0d7ec" stroke="#a0d7ec" stroke-width="6" stroke-linejoin="round"/><path d="M1650 1675 L1715 1665 L1735 1755 L1705 1845 L1645 1755Z" fill="#a0d7ec" stroke="#a0d7ec" stroke-width="6" stroke-linejoin="round"/><path d="M1580 1890 L1680 2020 L1600 2025 L1565 1945Z" fill="#a0d7ec" stroke="#a0d7ec" stroke-width="6" stroke-linejoin="round"/><path d="M1475 2287 L1695 2340 L1580 2470 L1500 2470 L1435 2410 L1440 2345Z" fill="#a0d7ec" stroke="#a0d7ec" stroke-width="6" stroke-linejoin="round"/><path d="M1090 2195 L1130 2200 L1210 2290 L1200 2300Z" fill="#a0d7ec" stroke="#a0d7ec" stroke-width="6" stroke-linejoin="round"/><path d="M4066 2305 L4412 2305 L4412 2480 L4006 2470Z" fill="#a0d7ec" stroke="#a0d7ec" stroke-width="6" stroke-linejoin="round"/><path d="M3686 2355 L3771 2455 L3671 2470 L3624 2415Z" fill="#a0d7ec" stroke="#a0d7ec" stroke-width="6" stroke-linejoin="round"/><path d="M4106 1765 L4166 1775 L4186 1875 L3986 1905 L3966 1885 L4066 1845Z" fill="#a0d7ec" stroke="#a0d7ec" stroke-width="6" stroke-linejoin="round"/><path d="M4256 1945 L4412 1945 L4412 2105 L4306 2135 L4246 2065Z" fill="#a0d7ec" stroke="#a0d7ec" stroke-width="6" stroke-linejoin="round"/><path d="M3906 2035 L3996 2015 L3996 2065 L3916 2075Z" fill="#a0d7ec" stroke="#a0d7ec" stroke-width="6" stroke-linejoin="round"/><path d="M4306 2835 L4412 2885 L4412 2965 L4316 2965Z" fill="#a0d7ec" stroke="#a0d7ec" stroke-width="6" stroke-linejoin="round"/><path d="M0 1195 L150 1190 L290 1150 L640 980 L800 850 L1000 680 L1200 470 L1420 70 L1480 0" fill="none" stroke="#a9dced" stroke-width="20" stroke-linecap="round" stroke-linejoin="round" /><path d="M615 2255 L1290 2685 L1400 2755 L1580 2945 L1640 3090" fill="none" stroke="#a9dced" stroke-width="20" stroke-linecap="round" stroke-linejoin="round" /><path d="M2536 660 L2596 640 L2746 640 L2781 670 L2776 760" fill="none" stroke="#8fcdb2" stroke-width="5" stroke-linecap="round" stroke-linejoin="round" /><path d="M2526 690 L2556 740 L2536 820" fill="none" stroke="#8fcdb2" stroke-width="5" stroke-linecap="round" stroke-linejoin="round" /><path d="M2661 640 L2656 740" fill="none" stroke="#8fcdb2" stroke-width="5" stroke-linecap="round" stroke-linejoin="round" /><path d="M2386 960 L2406 1020 L2356 1100 L2286 1180 L2206 1260" fill="none" stroke="#8fcdb2" stroke-width="5" stroke-linecap="round" stroke-linejoin="round" /><path d="M2406 1020 L2486 1000 L2556 1040 L2666 1000" fill="none" stroke="#8fcdb2" stroke-width="5" stroke-linecap="round" stroke-linejoin="round" /><path d="M2356 1100 L2396 1200 L2356 1300 L2406 1400 L2466 1500" fill="none" stroke="#8fcdb2" stroke-width="5" stroke-linecap="round" stroke-linejoin="round" /><path d="M2206 1120 L2286 1180 L2306 1300 L2266 1400 L2326 1545" fill="none" stroke="#8fcdb2" stroke-width="5" stroke-linecap="round" stroke-linejoin="round" /><path d="M2466 1060 L2446 1180 L2496 1330 L2536 1420" fill="none" stroke="#8fcdb2" stroke-width="5" stroke-linecap="round" stroke-linejoin="round" /><path d="M2306 1050 L2386 1100" fill="none" stroke="#8fcdb2" stroke-width="5" stroke-linecap="round" stroke-linejoin="round" /><path d="M2556 900 L2546 1040" fill="none" stroke="#8fcdb2" stroke-width="5" stroke-linecap="round" stroke-linejoin="round" /><path d="M3006 960 L3066 950 L3106 1000" fill="none" stroke="#8fcdb2" stroke-width="5" stroke-linecap="round" stroke-linejoin="round" /><path d="M3036 1075 L3236 1060 L3306 1050 L3321 1020" fill="none" stroke="#8fcdb2" stroke-width="5" stroke-linecap="round" stroke-linejoin="round" /><path d="M3086 1080 L3116 1180 L3206 1170 L3236 1060" fill="none" stroke="#8fcdb2" stroke-width="5" stroke-linecap="round" stroke-linejoin="round" /><path d="M3146 1065 L3166 1180" fill="none" stroke="#8fcdb2" stroke-width="5" stroke-linecap="round" stroke-linejoin="round" /><path d="M3196 1062 L3206 1170" fill="none" stroke="#8fcdb2" stroke-width="5" stroke-linecap="round" stroke-linejoin="round" /><path d="M3286 1070 L3336 1160 L3286 1180" fill="none" stroke="#8fcdb2" stroke-width="5" stroke-linecap="round" stroke-linejoin="round" /><path d="M3036 1075 L3016 1180 L3046 1290 L3136 1330 L3186 1230 L3206 1170" fill="none" stroke="#8fcdb2" stroke-width="5" stroke-linecap="round" stroke-linejoin="round" /><path d="M3336 1160 L3376 1260 L3406 1240" fill="none" stroke="#8fcdb2" stroke-width="5" stroke-linecap="round" stroke-linejoin="round" /><path d="M3136 1330 L3196 1400 L3286 1290 L3376 1260" fill="none" stroke="#8fcdb2" stroke-width="5" stroke-linecap="round" stroke-linejoin="round" /><path d="M3046 1290 L3066 1400 L3046 1420" fill="none" stroke="#8fcdb2" stroke-width="5" stroke-linecap="round" stroke-linejoin="round" /><path d="M3196 1400 L3186 1500 L3146 1545" fill="none" stroke="#8fcdb2" stroke-width="5" stroke-linecap="round" stroke-linejoin="round" /><path d="M3286 1290 L3356 1310 L3406 1340" fill="none" stroke="#8fcdb2" stroke-width="5" stroke-linecap="round" stroke-linejoin="round" /><path d="M3256 50 L3236 130 L3276 200 L3356 180 L3446 80" fill="none" stroke="#8fcdb2" stroke-width="5" stroke-linecap="round" stroke-linejoin="round" /><path d="M3276 200 L3266 250 L3326 300" fill="none" stroke="#8fcdb2" stroke-width="5" stroke-linecap="round" stroke-linejoin="round" /><path d="M3356 100 L3376 0" fill="none" stroke="#8fcdb2" stroke-width="5" stroke-linecap="round" stroke-linejoin="round" /><path d="M3446 80 L3456 200 L3386 240 L3376 300" fill="none" stroke="#8fcdb2" stroke-width="5" stroke-linecap="round" stroke-linejoin="round" /><path d="M3396 330 L3421 360 L3366 435" fill="none" stroke="#8fcdb2" stroke-width="5" stroke-linecap="round" stroke-linejoin="round" /><path d="M3766 0 L3786 300 L3776 520 L3796 680 L3796 790" fill="none" stroke="#8fcdb2" stroke-width="5" stroke-linecap="round" stroke-linejoin="round" /><path d="M3796 680 L3896 670 L3926 600 L3936 420 L3976 330 L4106 270 L4412 260" fill="none" stroke="#8fcdb2" stroke-width="5" stroke-linecap="round" stroke-linejoin="round" /><path d="M4086 710 L4156 670 L4166 850 L4136 1000 L4146 1100 L4106 1545" fill="none" stroke="#8fcdb2" stroke-width="5" stroke-linecap="round" stroke-linejoin="round" /><path d="M4086 710 L4126 900" fill="none" stroke="#8fcdb2" stroke-width="5" stroke-linecap="round" stroke-linejoin="round" /><path d="M2206 1575 L2266 1635 L2326 1725 L2446 1755 L2536 1745" fill="none" stroke="#8fcdb2" stroke-width="5" stroke-linecap="round" stroke-linejoin="round" /><path d="M2326 1725 L2346 1875 L2266 1895" fill="none" stroke="#8fcdb2" stroke-width="5" stroke-linecap="round" stroke-linejoin="round" /><path d="M2346 1875 L2386 1965 L2366 2065" fill="none" stroke="#8fcdb2" stroke-width="5" stroke-linecap="round" stroke-linejoin="round" /><path d="M2446 1755 L2426 1845" fill="none" stroke="#8fcdb2" stroke-width="5" stroke-linecap="round" stroke-linejoin="round" /><path d="M2206 1785 L2276 1745" fill="none" stroke="#8fcdb2" stroke-width="5" stroke-linecap="round" stroke-linejoin="round" /><path d="M2236 1685 L2306 1665 L2476 1615 L2536 1565" fill="none" stroke="#8fcdb2" stroke-width="5" stroke-linecap="round" stroke-linejoin="round" /><path d="M2386 1965 L2496 2015 L2506 2135" fill="none" stroke="#8fcdb2" stroke-width="5" stroke-linecap="round" stroke-linejoin="round" /><path d="M2266 2025 L2316 1985 L2366 2065 L2306 2075" fill="none" stroke="#8fcdb2" stroke-width="5" stroke-linecap="round" stroke-linejoin="round" /><path d="M2326 1955 L2391 1950 L2371 1995 L2341 1990 L2326 1955" fill="none" stroke="#8fcdb2" stroke-width="5" stroke-linecap="round" stroke-linejoin="round" /><path d="M2206 1945 L2256 1905" fill="none" stroke="#8fcdb2" stroke-width="5" stroke-linecap="round" stroke-linejoin="round" /><path d="M2226 2105 L2266 2025" fill="none" stroke="#8fcdb2" stroke-width="5" stroke-linecap="round" stroke-linejoin="round" /><path d="M2496 2015 L2456 1975 L2446 2005" fill="none" stroke="#8fcdb2" stroke-width="5" stroke-linecap="round" stroke-linejoin="round" /><path d="M2586 1645 L2526 1745 L2551 1815 L2501 1915 L2516 2135 L2536 2185 L2686 2245 L2846 2285 L3026 2185 L3146 2155 L3181 2085 L3161 2035 L3026 1945 L2966 1835 L2986 1745 L2961 1655 L2856 1585" fill="none" stroke="#8fcdb2" stroke-width="5" stroke-linecap="round" stroke-linejoin="round" /><path d="M2966 1760 L3036 1755 L3086 1695 L3066 1640" fill="none" stroke="#8fcdb2" stroke-width="5" stroke-linecap="round" stroke-linejoin="round" /><path d="M3086 1695 L3166 1695 L3246 1735 L3256 1825 L3356 1815 L3486 1765" fill="none" stroke="#8fcdb2" stroke-width="5" stroke-linecap="round" stroke-linejoin="round" /><path d="M3166 1695 L3156 1745 L3111 2005" fill="none" stroke="#8fcdb2" stroke-width="5" stroke-linecap="round" stroke-linejoin="round" /><path d="M3131 1805 L3166 1810 L3156 1880 L3121 1875 L3131 1805" fill="none" stroke="#8fcdb2" stroke-width="5" stroke-linecap="round" stroke-linejoin="round" /><path d="M3216 1895 L3266 1945 L3326 1985" fill="none" stroke="#8fcdb2" stroke-width="5" stroke-linecap="round" stroke-linejoin="round" /><path d="M3266 1945 L3206 1995 L3166 2035" fill="none" stroke="#8fcdb2" stroke-width="5" stroke-linecap="round" stroke-linejoin="round" /><path d="M3356 1815 L3336 1845 L3366 1875 L3406 1925 L3421 1985 L3576 1980" fill="none" stroke="#8fcdb2" stroke-width="5" stroke-linecap="round" stroke-linejoin="round" /><path d="M3326 1835 L3286 1935 L3266 1945" fill="none" stroke="#8fcdb2" stroke-width="5" stroke-linecap="round" stroke-linejoin="round" /><path d="M3166 2035 L3506 2055 L3416 2305" fill="none" stroke="#8fcdb2" stroke-width="5" stroke-linecap="round" stroke-linejoin="round" /><path d="M3276 2045 L3266 2085 L3446 2185" fill="none" stroke="#8fcdb2" stroke-width="5" stroke-linecap="round" stroke-linejoin="round" /><path d="M3346 2050 L3336 2115" fill="none" stroke="#8fcdb2" stroke-width="5" stroke-linecap="round" stroke-linejoin="round" /><path d="M3421 2055 L3396 2145" fill="none" stroke="#8fcdb2" stroke-width="5" stroke-linecap="round" stroke-linejoin="round" /><path d="M3516 1965 L3506 2055" fill="none" stroke="#8fcdb2" stroke-width="5" stroke-linecap="round" stroke-linejoin="round" /><path d="M3196 2185 L3196 2235 L3276 2295 L3486 2285 L3546 2265 L3556 2205 L3536 2185" fill="none" stroke="#8fcdb2" stroke-width="5" stroke-linecap="round" stroke-linejoin="round" /><path d="M3326 2185 L3336 2305" fill="none" stroke="#8fcdb2" stroke-width="5" stroke-linecap="round" stroke-linejoin="round" /><path d="M3126 2165 L3136 2205 L3196 2235" fill="none" stroke="#8fcdb2" stroke-width="5" stroke-linecap="round" stroke-linejoin="round" /><path d="M3006 2185 L3021 2225" fill="none" stroke="#8fcdb2" stroke-width="5" stroke-linecap="round" stroke-linejoin="round" /><path d="M2926 2225 L2946 2255" fill="none" stroke="#8fcdb2" stroke-width="5" stroke-linecap="round" stroke-linejoin="round" /><path d="M2206 1565 L2306 1585 L2406 1565 L2536 1565" fill="none" stroke="#8fcdb2" stroke-width="5" stroke-linecap="round" stroke-linejoin="round" /><path d="M2476 1615 L2506 1725" fill="none" stroke="#8fcdb2" stroke-width="5" stroke-linecap="round" stroke-linejoin="round" /><path d="M3806 2185 L3906 1875 L4106 1795 L4412 1665" fill="none" stroke="#8fcdb2" stroke-width="5" stroke-linecap="round" stroke-linejoin="round" /><path d="M3826 2185 L4412 2205" fill="none" stroke="#8fcdb2" stroke-width="5" stroke-linecap="round" stroke-linejoin="round" /><path d="M3906 1875 L3966 1965 L4412 1795" fill="none" stroke="#8fcdb2" stroke-width="5" stroke-linecap="round" stroke-linejoin="round" /><path d="M2100 1190 L2160 1150 L2206 1140" fill="none" stroke="#8fcdb2" stroke-width="5" stroke-linecap="round" stroke-linejoin="round" /><path d="M2050 1290 L2110 1320 L2206 1330" fill="none" stroke="#8fcdb2" stroke-width="5" stroke-linecap="round" stroke-linejoin="round" /><path d="M1900 1230 L1960 1130 L2030 1000 L2060 960" fill="none" stroke="#8fcdb2" stroke-width="5" stroke-linecap="round" stroke-linejoin="round" /><path d="M1960 1130 L2010 1180 L1960 1280" fill="none" stroke="#8fcdb2" stroke-width="5" stroke-linecap="round" stroke-linejoin="round" /><path d="M0 120 L40 200 L20 300 L60 420 L40 520 L90 570 L30 590" fill="none" stroke="#8fcdb2" stroke-width="5" stroke-linecap="round" stroke-linejoin="round" /><path d="M110 20 L160 60" fill="none" stroke="#8fcdb2" stroke-width="5" stroke-linecap="round" stroke-linejoin="round" /><path d="M40 200 L90 180" fill="none" stroke="#8fcdb2" stroke-width="5" stroke-linecap="round" stroke-linejoin="round" /><path d="M60 420 L10 440" fill="none" stroke="#8fcdb2" stroke-width="5" stroke-linecap="round" stroke-linejoin="round" /><path d="M20 640 L60 560" fill="none" stroke="#8fcdb2" stroke-width="5" stroke-linecap="round" stroke-linejoin="round" /><path d="M2100 1835 L2140 1885 L2206 1875" fill="none" stroke="#8fcdb2" stroke-width="5" stroke-linecap="round" stroke-linejoin="round" /><path d="M2110 1845 L2160 1805 L2206 1755" fill="none" stroke="#8fcdb2" stroke-width="5" stroke-linecap="round" stroke-linejoin="round" /><path d="M2180 2115 L2206 2125" fill="none" stroke="#8fcdb2" stroke-width="5" stroke-linecap="round" stroke-linejoin="round" /><path d="M0 1120 L100 1110 L300 1060 L600 920 L800 760 L1000 590 L1130 460" fill="none" stroke="#c6cdd7" stroke-width="18" stroke-linecap="round" stroke-linejoin="round" /><path d="M0 1120 L100 1110 L300 1060 L600 920 L800 760 L1000 590 L1130 460" fill="none" stroke="#e4e7ed" stroke-width="11" stroke-linecap="round" stroke-linejoin="round" /><path d="M0 700 L200 600 L280 480 L230 400" fill="none" stroke="#c6cdd7" stroke-width="14" stroke-linecap="round" stroke-linejoin="round" /><path d="M0 700 L200 600 L280 480 L230 400" fill="none" stroke="#e4e7ed" stroke-width="7" stroke-linecap="round" stroke-linejoin="round" /><path d="M0 560 L220 570 L330 480 L420 470" fill="none" stroke="#c6cdd7" stroke-width="12" stroke-linecap="round" stroke-linejoin="round" /><path d="M0 560 L220 570 L330 480 L420 470" fill="none" stroke="#e4e7ed" stroke-width="5" stroke-linecap="round" stroke-linejoin="round" /><path d="M0 1845 L185 1900 L830 1895 L900 1815 L950 1725" fill="none" stroke="#c6cdd7" stroke-width="12" stroke-linecap="round" stroke-linejoin="round" /><path d="M0 1845 L185 1900 L830 1895 L900 1815 L950 1725" fill="none" stroke="#e4e7ed" stroke-width="5" stroke-linecap="round" stroke-linejoin="round" /><path d="M0 2705 L365 2707 L370 3090" fill="none" stroke="#cfd5de" stroke-width="5" stroke-linecap="round" stroke-linejoin="round" /><path d="M290 2707 L300 3090" fill="none" stroke="#cfd5de" stroke-width="5" stroke-linecap="round" stroke-linejoin="round" /><path d="M2786 3090 L2846 2895 L2966 2765 L3126 2710 L3356 2735 L3456 2805 L3476 3090" fill="none" stroke="#cfd5e6" stroke-width="5" stroke-linecap="round" stroke-linejoin="round" /><path d="M3476 2935 L3646 2933" fill="none" stroke="#cfd5e6" stroke-width="5" stroke-linecap="round" stroke-linejoin="round" /><path d="M2386 250 L2806 500 L3056 600 L3206 720 L3406 900 L3586 1080 L3646 1200 L3671 1545 L3671 2095 L3646 2245 L3556 2375 L3406 2455 L3206 2475 L2906 2425 L2656 2345 L2206 2135 L2100 2085 L1900 1985" fill="none" stroke="#c9cfd9" stroke-width="34" stroke-linecap="round" stroke-linejoin="round" /><path d="M2386 250 L2806 500 L3056 600 L3206 720 L3406 900 L3586 1080 L3646 1200 L3671 1545 L3671 2095 L3646 2245 L3556 2375 L3406 2455 L3206 2475 L2906 2425 L2656 2345 L2206 2135 L2100 2085 L1900 1985" fill="none" stroke="#dde1e8" stroke-width="24" stroke-linecap="round" stroke-linejoin="round" /><path d="M3666 0 L3666 100 L3536 250 L3286 520 L3086 560 L3046 600" fill="none" stroke="#c6cdd7" stroke-width="14" stroke-linecap="round" stroke-linejoin="round" /><path d="M3666 0 L3666 100 L3536 250 L3286 520 L3086 560 L3046 600" fill="none" stroke="#e4e7ed" stroke-width="7" stroke-linecap="round" stroke-linejoin="round" /><path d="M3546 260 L3656 360 L3676 560 L3556 700" fill="none" stroke="#c6cdd7" stroke-width="12" stroke-linecap="round" stroke-linejoin="round" /><path d="M3546 260 L3656 360 L3676 560 L3556 700" fill="none" stroke="#e4e7ed" stroke-width="5" stroke-linecap="round" stroke-linejoin="round" /><path d="M3136 600 L3466 350" fill="none" stroke="#d3d8e1" stroke-width="7" stroke-linecap="round" stroke-linejoin="round" /><path d="M3181 638 L3503 388" fill="none" stroke="#d3d8e1" stroke-width="7" stroke-linecap="round" stroke-linejoin="round" /><path d="M3226 676 L3540 426" fill="none" stroke="#d3d8e1" stroke-width="7" stroke-linecap="round" stroke-linejoin="round" /><path d="M3271 714 L3577 464" fill="none" stroke="#d3d8e1" stroke-width="7" stroke-linecap="round" stroke-linejoin="round" /><path d="M3316 752 L3614 502" fill="none" stroke="#d3d8e1" stroke-width="7" stroke-linecap="round" stroke-linejoin="round" /><path d="M3361 790 L3651 540" fill="none" stroke="#d3d8e1" stroke-width="7" stroke-linecap="round" stroke-linejoin="round" /><path d="M3406 828 L3688 578" fill="none" stroke="#d3d8e1" stroke-width="7" stroke-linecap="round" stroke-linejoin="round" /><path d="M3451 866 L3725 616" fill="none" stroke="#d3d8e1" stroke-width="7" stroke-linecap="round" stroke-linejoin="round" /><path d="M3496 904 L3762 654" fill="none" stroke="#d3d8e1" stroke-width="7" stroke-linecap="round" stroke-linejoin="round" /><path d="M3406 880 L3606 730" fill="none" stroke="#d3d8e1" stroke-width="7" stroke-linecap="round" stroke-linejoin="round" /><path d="M3451 920 L3651 770" fill="none" stroke="#d3d8e1" stroke-width="7" stroke-linecap="round" stroke-linejoin="round" /><path d="M3496 960 L3696 810" fill="none" stroke="#d3d8e1" stroke-width="7" stroke-linecap="round" stroke-linejoin="round" /><path d="M3541 1000 L3741 850" fill="none" stroke="#d3d8e1" stroke-width="7" stroke-linecap="round" stroke-linejoin="round" /><path d="M3586 1040 L3786 890" fill="none" stroke="#d3d8e1" stroke-width="7" stroke-linecap="round" stroke-linejoin="round" /><path d="M3631 1080 L3831 930" fill="none" stroke="#d3d8e1" stroke-width="7" stroke-linecap="round" stroke-linejoin="round" /><path d="M3126 590 L3696 1080" fill="none" stroke="#d3d8e1" stroke-width="8" stroke-linecap="round" stroke-linejoin="round" /><path d="M3296 520 L3706 960" fill="none" stroke="#d3d8e1" stroke-width="8" stroke-linecap="round" stroke-linejoin="round" /><path d="M3546 340 L3646 430 L3456 600" fill="none" stroke="#d3d8e1" stroke-width="8" stroke-linecap="round" stroke-linejoin="round" /><path d="M2536 0 L2456 150 L2386 260 L2206 520 L2206 520 L2050 700 L1900 970 L1800 1200 L1700 1400 L1650 1545 L1650 1545 L1560 1745 L1430 1965 L1330 2165 L1280 2445 L1275 2745 L1350 3090" fill="none" stroke="#cbd1db" stroke-width="30" stroke-linecap="round" stroke-linejoin="round" /><path d="M2536 0 L2456 150 L2386 260 L2206 520 L2206 520 L2050 700 L1900 970 L1800 1200 L1700 1400 L1650 1545 L1650 1545 L1560 1745 L1430 1965 L1330 2165 L1280 2445 L1275 2745 L1350 3090" fill="none" stroke="#eef0f4" stroke-width="20" stroke-linecap="round" stroke-linejoin="round" /><path d="M2536 0 L2456 150 L2386 260 L2206 520 L2206 520 L2050 700 L1900 970 L1800 1200 L1700 1400 L1650 1545 L1650 1545 L1560 1745 L1430 1965 L1330 2165 L1280 2445 L1275 2745 L1350 3090" fill="none" stroke="#cbd1db" stroke-width="4" stroke-linecap="round" stroke-linejoin="round" /><path d="M1200 1050 L1290 1060 L1340 1280 L1500 1500 L1440 1545 L1290 1330Z" fill="#d8dde6" /><path d="M1290 455 L1260 700 L1225 900 L1215 1050 L1300 1300 L1420 1470 L1470 1545 L1470 1545 L1700 1875 L1800 2105" fill="none" stroke="#cbd1db" stroke-width="24" stroke-linecap="round" stroke-linejoin="round" /><path d="M1390 455 L1330 600 L1290 800 L1265 1050 L1330 1250 L1480 1450 L1560 1545 L1560 1545 L1760 1845 L1850 2065" fill="none" stroke="#cbd1db" stroke-width="24" stroke-linecap="round" stroke-linejoin="round" /><path d="M1290 455 L1260 700 L1225 900 L1215 1050 L1300 1300 L1420 1470 L1470 1545 L1470 1545 L1700 1875 L1800 2105" fill="none" stroke="#e3e7ed" stroke-width="15" stroke-linecap="round" stroke-linejoin="round" /><path d="M1390 455 L1330 600 L1290 800 L1265 1050 L1330 1250 L1480 1450 L1560 1545 L1560 1545 L1760 1845 L1850 2065" fill="none" stroke="#e3e7ed" stroke-width="15" stroke-linecap="round" stroke-linejoin="round" /><path d="M1400 1545 L1900 2185" fill="none" stroke="#cbd1db" stroke-width="90" stroke-linecap="round" stroke-linejoin="round" /><path d="M1400 1545 L1900 2185" fill="none" stroke="#dadfe8" stroke-width="80" stroke-linecap="round" stroke-linejoin="round" /><path d="M1335 1545 L1330 1695 L1250 1845 L1090 1945 L850 1965" fill="none" stroke="#c9cfd9" stroke-width="44" stroke-linecap="round" stroke-linejoin="round" /><path d="M1335 1545 L1330 1695 L1250 1845 L1090 1945 L850 1965" fill="none" stroke="#dadfe8" stroke-width="34" stroke-linecap="round" stroke-linejoin="round" /><path d="M850 2105 L960 2165 L1100 2345 L1200 2485 L1400 2585 L1600 2555 L1760 2415 L1810 2245 L1780 2145" fill="none" stroke="#c9cfd9" stroke-width="40" stroke-linecap="round" stroke-linejoin="round" /><path d="M850 2105 L960 2165 L1100 2345 L1200 2485 L1400 2585 L1600 2555 L1760 2415 L1810 2245 L1780 2145" fill="none" stroke="#dde1e8" stroke-width="30" stroke-linecap="round" stroke-linejoin="round" /><path d="M1420 2225 L1370 2325 L1400 2445 L1500 2515 L1640 2485 L1740 2385 L1770 2285" fill="none" stroke="#c9cfd9" stroke-width="40" stroke-linecap="round" stroke-linejoin="round" /><path d="M1420 2225 L1370 2325 L1400 2445 L1500 2515 L1640 2485 L1740 2385 L1770 2285" fill="none" stroke="#dde1e8" stroke-width="30" stroke-linecap="round" stroke-linejoin="round" /><path d="M0 1935 L900 1940 L1300 1985 L1700 2065 L2206 2245 L2706 2445 L3206 2540 L3706 2560 L4412 2565 L4412 2695 L3906 2695 L3206 2655 L2656 2585 L2206 2435 L1500 2235 L1100 2145 L700 2095 L0 2090Z" fill="#dadfe8" stroke="#c9cfd9" stroke-width="8" stroke-linejoin="round"/><path d="M0 2000 L700 2005 L1200 2065 L1700 2155 L2206 2340 L2676 2510 L3206 2597 L3806 2625 L4412 2627" fill="none" stroke="#cdd3dd" stroke-width="7" stroke-linecap="round" stroke-linejoin="round" /><path d="M3206 2597 L3806 2625 L4412 2627" fill="none" stroke="#e6f3ea" stroke-width="8" stroke-linecap="round" stroke-linejoin="round" /><path d="M3906 2700 L4206 2730 L4412 2845" fill="none" stroke="#8ea2c6" stroke-width="30" stroke-linecap="round" stroke-linejoin="round" /><g fill="none" stroke="#8a919c" stroke-width="9" stroke-linecap="round" stroke-linejoin="round"><path d="M130 2023H200M175 2003L203 2023L175 2043"/><path d="M950 2003H885M910 1983L882 2003L910 2023"/></g></svg>
<!-- map overlays -->
<div class="a" id="mapov" style="left:1582px;top:1098px;width:927px;height:649px;overflow:hidden;border-radius:0 0 9px 9px">
<svg style="left:0;top:0" width="927" height="649" viewBox="1582 1098 927 649" font-family="Liberation Sans">
<g font-size="20.1" fill="#3b4654" stroke="#fff" stroke-width="4" paint-order="stroke" stroke-linejoin="round" text-anchor="middle">
<text transform="translate(2006.8 1283) rotate(-62)" font-size="18.4">Victory Way</text>
<text transform="translate(2133 1195) rotate(31)">Century Dr</text>
<text transform="translate(2098 1581) rotate(26)">Century Dr</text>
<text transform="translate(2346 1482) rotate(90)" font-size="19.2">Century Dr</text>
<text transform="translate(1911 1557) rotate(16)" font-size="23.6">Osceola Pkwy</text>
<text transform="translate(2205 1649) rotate(15.500)" font-size="23.6">Osceola Pkwy</text>
<text transform="translate(2478 1110) rotate(9)" font-size="22">Sonia Pkwy</text>
<text x="2503" y="1668" font-size="24">la</text>
<text x="2505" y="1298" font-size="27" fill="#2f7d52">W</text>
</g>
<text x="1693.500" y="1211.600" font-size="24" fill="#5276dd" stroke="#fff" stroke-width="3" paint-order="stroke">Olaf</text>
<circle cx="1765.600" cy="1204.200" r="20" fill="rgba(0,0,0,.25)"/>
<circle cx="1765.600" cy="1203.200" r="20" fill="#fff"/><circle cx="1765.600" cy="1203.200" r="17.800" fill="#bac5fb"/>
<text x="1765.600" y="1211" font-size="22" font-weight="bold" fill="#3b3fe0" text-anchor="middle">P</text>
<g font-size="25" fill="#d43eb1" stroke="#fff" stroke-width="3.500" paint-order="stroke" stroke-linejoin="round">
<text x="2123.800" y="1270.900" font-size="25.300">Little Mermaid, of the</text>
<text x="2123.800" y="1295.700" font-size="24.800">(Art of Animation)…</text>
<text x="2017.300" y="1394.500" text-anchor="end" font-size="25.300">Disney's Art of</text>
<text x="2017.300" y="1419.800" text-anchor="end" font-size="25.200">Animation Resort</text>
<text x="2308.900" y="1394.500" font-size="24.300">Disney's Pop</text>
<text x="2309.500" y="1419.800" font-size="23.900">Century Resort</text>
</g>
<defs><g id="poi"><path d="M0 28.500C-5 22-21 15-21 0A21 21 0 0 1 21 0C21 15 5 22 0 28.500Z" fill="#fff" stroke="rgba(0,0,0,.18)" stroke-width="1.500"/><circle r="18.300" fill="#e254c1"/><path d="M-7.500 8.500L3 -6" stroke="#fff" stroke-width="2" stroke-linecap="round"/><path d="M-4 -8.500A10 10 0 0 1 11 3L3.500 -1.500Z M-4 -8.500L-0.500 -3.500 3.500 -1.500" fill="#fff" transform="rotate(-4)"/><circle cx="-7" cy="-2" r="2.300" fill="#fff"/></g></defs>
<use href="#poi" x="2045" y="1398"/>
<use href="#poi" x="2095.600" y="1270.400"/><use href="#poi" x="2212.600" y="1367.800"/><use href="#poi" x="2280.500" y="1396.200"/>
<rect x="2147.500" y="1415.500" width="26" height="26" rx="7" fill="#4b5c72" stroke="#fff" stroke-width="2"/>
<path d="M2153 1424.500H2167.500M2160.200 1424.500V1429 M2154.500 1429H2166V1435.500H2154.500Z" fill="none" stroke="#fff" stroke-width="2.200"/>
<path d="M2045.100 1423.500C2041 1408 2022.200 1397 2022.200 1378.600A22.900 22.900 0 0 1 2068 1378.600C2068 1397 2049.200 1408 2045.100 1423.500Z" fill="#d6493b" stroke="#b8352a" stroke-width="1.200"/>
<circle cx="2045.100" cy="1378.200" r="8.800" fill="#9a1d17"/>
<g font-size="38.500" transform="translate(1601.500 1736) scale(.83 1)"><text stroke="#fff" stroke-width="4" fill="#fff">Google</text><text stroke-width="1"><tspan fill="#4a86f0" stroke="#4a86f0">G</tspan><tspan fill="#de4a3d" stroke="#de4a3d">o</tspan><tspan fill="#f0b72f" stroke="#f0b72f">o</tspan><tspan fill="#4a86f0" stroke="#4a86f0">g</tspan><tspan fill="#3fa657" stroke="#3fa657">l</tspan><tspan fill="#de4a3d" stroke="#de4a3d">e</tspan></text></g>
</svg>
<div class="a" style="left:15.800px;top:15.400px;width:357.500px;height:80.300px;background:#fff;border:1px solid #a8a8a8;border-radius:13px;box-shadow:0 2px 6px rgba(0,0,0,.3)"></div>
<div class="t b" style="left:31.500px;top:33.600px;font-size:20.700px;color:#3c4349">1850 Animation Way</div>
<div class="t b" style="left:31.500px;top:58.100px;font-size:20.800px;color:#3c4349">Lake Buena Vista, FL 32830-8400</div>
<div class="a" style="left:835.800px;top:402.400px;width:72.400px;height:72.400px;border-radius:50%;background:#fff;box-shadow:0 1px 5px rgba(0,0,0,.3)"></div>
<svg style="left:835.800px;top:402.400px" width="72.400" height="72.400" viewBox="-36.200 -36.200 72.400 72.400"><g fill="none" stroke="#666" stroke-width="4.200"><path d="M-6.500 -12.500L0 -19L6.500 -12.500"/><path d="M-6.500 12.500L0 19L6.500 12.500"/><path d="M-12.500 -6.500L-19 0L-12.500 6.500"/><path d="M12.500 -6.500L19 0L12.500 6.500"/></g></svg>
<div class="a" style="left:835.800px;top:533.200px;width:72px;height:71.500px;border-radius:4px;background:#fff;box-shadow:0 1px 4px rgba(0,0,0,.3)"></div>
<svg style="left:855px;top:542px" width="32" height="54" viewBox="0 0 32 54"><circle cx="16" cy="10" r="9.600" fill="#f5c046" stroke="#c98d2a" stroke-width=".8"/><path d="M6 19.500H26L31 38.500L27.500 39.500L24.500 31V53H17.500V38H14.500V53H7.500V31L4.500 39.500L1 38.500Z" fill="#f2b33a" stroke="#c98d2a" stroke-width=".8"/><path d="M10 19.500H22L16 28Z" fill="#d9873a"/></svg>
<div class="a" style="left:349px;top:623.500px;width:578px;height:26px;background:rgba(245,245,245,.72)"></div>
<div class="a" style="left:524.500px;top:623.500px;width:2px;height:26px;background:rgba(255,255,255,.6)"></div>
<div class="a" style="left:682.500px;top:623.500px;width:2px;height:26px;background:rgba(255,255,255,.6)"></div>
<div class="a" style="left:753.500px;top:623.500px;width:2px;height:26px;background:rgba(255,255,255,.6)"></div>
<div class="t" style="left:358.500px;top:627.400px;font-size:18px;color:#000">Keyboard shortcuts</div>
<div class="t" style="left:536.600px;top:627.400px;font-size:18px;color:#000">Map data ©2025</div>
<div class="t" style="left:693px;top:627.400px;font-size:18px;color:#000">Terms</div>
<div class="t" style="left:765px;top:627.400px;font-size:17.600px;color:#000">Report a map error</div>
</div>
<!-- right cards -->
<div class="a rc" style="top:449px;height:273px"><div class="bar" style="background:#4670cc"></div></div>
<div class="t rt" style="left:2596px;top:483px;letter-spacing:-1.02px">Project Percent Complete</div>
<div class="a" style="left:2582px;top:557px;width:885px;height:43px;background:#dfe2e6;border-radius:9px;overflow:hidden"><div class="a" style="left:0;top:0;width:752px;height:43px;background:#6f97ef"></div></div>
<div class="t" style="left:2931px;top:565px;font-size:26.500px;color:#fff">85%</div>
<div class="t gl" style="left:2611px;top:632px">Last updated</div>
<div class="t gl" style="left:2611px;top:668px">Updated by</div>
<div class="t bl" style="right:97px;top:631px;font-size:24.600px">November 21, 2025</div>
<div class="t bl" style="right:97px;top:667px;font-size:24.600px">Chris Worth</div>

<div class="a rc" style="top:752px;height:219px"><div class="bar" style="background:#4670cc"></div></div>
<div class="t rt" style="left:2596px;top:785px;letter-spacing:-1.15px">Contractual Completion Date</div>
<div class="t bl" style="left:2650px;top:864px;font-size:31.700px">October 31, 2026</div>
<div class="t bl" style="left:3324px;top:864px;font-size:32.400px">344</div>
<div class="t gl" style="left:2611px;top:916px">Contractual Completion Date</div>
<div class="t gl" style="right:97px;top:916px">Days remaining</div>

<div class="a rc" style="top:1000px;height:390px"><div class="bar" style="background:#55a75c"></div></div>
<div class="t rt" style="left:2596px;top:1032px;letter-spacing:-1.12px">Contract Value</div>
<div class="t" style="left:2597px;top:1081px;font-size:25.300px;font-style:italic;color:#b0b0b0">From Accounting System</div>
<div class="t g c" style="left:2824px;width:400px;top:1155px;font-size:35px">$4,120,815.43</div>
<div class="t gl c" style="left:2824px;width:400px;top:1211px">Revised Contract Value</div>
<div class="t g c" style="left:2555px;width:400px;top:1283px;font-size:31.400px">$3,883,833.03</div>
<div class="t gl c" style="left:2555px;width:400px;top:1336px">Original Contract Value</div>
<div class="t g c" style="left:3083px;width:400px;top:1283px;font-size:31.400px">$236,982.40</div>
<div class="t gl c" style="left:3083px;width:400px;top:1336px">Approved Change Orders</div>

<div class="a rc" style="top:1419px;height:434px"><div class="bar" style="background:#55a75c"></div></div>
<div class="t rt" style="left:2596px;top:1452px;letter-spacing:-0.95px">Estimate Value</div>
<div class="t" style="left:2597px;top:1501px;font-size:25.300px;font-style:italic;color:#b0b0b0">From Project Center</div>
<div class="t g c" style="left:2644px;width:400px;top:1574px;font-size:31.400px">$3,900,000.00</div>
<div class="t gl c" style="left:2644px;width:400px;top:1627px">Approved Estimate</div>
<div class="t g c" style="left:3009px;width:400px;top:1574px;font-size:31.400px">$4,020,243.17</div>
<div class="t gl c" style="left:3009px;width:400px;top:1627px">Revised Estimate</div>
<div class="t gl" style="left:2611px;top:1708px;font-size:23.700px">Variances ROM Total</div>
<div class="t gl" style="left:2611px;top:1753px;font-size:23.700px">Variances Awaiting Approval Total</div>
<div class="t gl" style="left:2611px;top:1798px;font-size:23.700px">Variances Approved Total</div>
<div class="t g" style="right:97px;top:1699px;font-size:31.800px">$105,009.00</div>
<div class="t g" style="right:97px;top:1744px;font-size:31.800px">$235,457.82</div>
<div class="t g" style="right:97px;top:1789px;font-size:31.800px">$120,243.17</div>
<!-- bottom panels -->
<div class="a" style="left:595px;top:2111px;width:1691px;height:300px;background:#fff;border-radius:10px;box-shadow:0 3px 8px rgba(0,0,0,.3)"></div>
<div class="a" style="left:595px;top:2111px;width:1691px;height:130px;background:#f8f9fa;border-radius:10px 10px 0 0;border-bottom:1.500px solid #dde0e6"></div>
<div class="t b" style="left:630px;top:2154.500px;font-size:42.500px;color:#343a40;letter-spacing:-1.14px">Additional Job Locations</div>
<div class="a btn" style="left:2164px;top:2147px;width:86px;height:57px;border-color:#5ab963"></div>
<svg style="left:2192px;top:2160px" width="30" height="30" viewBox="-15 -15 30 30"><circle r="14.500" fill="#5cbb65"/><path d="M-6.500 0H6.500M0 -6.500V6.500" stroke="#fff" stroke-width="3.200" stroke-linecap="round"/></svg>
<div class="a card" style="left:631px;top:2276px;width:577px;height:60px;box-shadow:0 2px 7px rgba(0,0,0,.2)"></div>
<div class="a card" style="left:1250px;top:2276px;width:577px;height:60px;box-shadow:0 2px 7px rgba(0,0,0,.2)"></div>

<div class="a" style="left:2303px;top:2111px;width:1208px;height:300px;background:#fff;border-radius:10px;box-shadow:0 3px 8px rgba(0,0,0,.3)"></div>
<div class="a" style="left:2303px;top:2111px;width:1208px;height:130px;background:#f8f9fa;border-radius:10px 10px 0 0;border-bottom:1.500px solid #dde0e6"></div>
<div class="t b" style="left:2338px;top:2154.500px;font-size:42.500px;color:#343a40;letter-spacing:-1.26px">Activity Log</div>
<div class="a btn" style="left:3388px;top:2147px;width:86px;height:57px"></div>
<svg style="left:3416px;top:2161px" width="32" height="28" viewBox="0 0 32 28" fill="#4a7de6"><rect x="0" y="0" width="13" height="3.400" rx="1.700"/><rect x="18" y="0" width="13" height="3.400" rx="1.700"/><rect x="0" y="8" width="13" height="3.400" rx="1.700"/><rect x="18" y="8" width="13" height="3.400" rx="1.700"/><rect x="0" y="16" width="13" height="3.400" rx="1.700"/><rect x="18" y="16" width="13" height="3.400" rx="1.700"/><rect x="0" y="24" width="13" height="3.400" rx="1.700"/><rect x="18" y="24" width="13" height="3.400" rx="1.700"/></svg>
<div class="a" style="left:580px;top:288px;width:14.500px;height:2006px;background:#e9e9e9"></div>
</body></html>
